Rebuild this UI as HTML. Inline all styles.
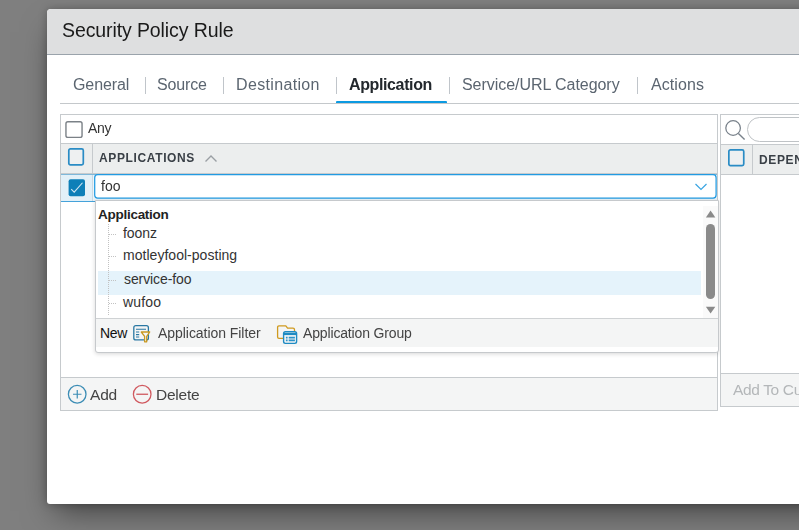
<!DOCTYPE html>
<html><head><meta charset="utf-8"><title>Security Policy Rule</title>
<style>
*{box-sizing:border-box;margin:0;padding:0}
html,body{width:799px;height:530px;overflow:hidden;background:#7f7f7f;font-family:"Liberation Sans",sans-serif;}
.abs{position:absolute}
#dlg{position:absolute;left:47px;top:9px;width:800px;height:495px;background:#fff;border-radius:4px 4px 3px 3px;box-shadow:0 15px 30px -8px rgba(0,0,0,.5),0 0 8px rgba(0,0,0,.25);}
#hdr{position:absolute;left:0;top:0;width:100%;height:46px;background:#dedfe0;border-bottom:1px solid #9aa3ab;border-radius:4px 4px 0 0}
.t{position:absolute;white-space:nowrap;line-height:1;will-change:transform}
.tab{font-size:16px;color:#5b6570}
.sep{position:absolute;top:77px;width:1px;height:17px;background:#c0c5ca}
.lcd{will-change:auto}
</style></head><body>
<div id="dlg"><div id="hdr"></div></div>

<div class="t" id="title" style="left:61.6px;top:20.8px;font-size:19.5px;letter-spacing:-0.1px;color:#1a1a1a">Security Policy Rule</div>

<!-- tabs -->
<div class="t tab" style="left:72.6px;top:77.3px;letter-spacing:-0.1px">General</div>
<div class="sep" style="left:145px"></div>
<div class="t tab" style="left:157.4px;top:77.3px;letter-spacing:-0.15px">Source</div>
<div class="sep" style="left:223px"></div>
<div class="t tab" style="left:236.3px;top:77.3px;letter-spacing:0.34px">Destination</div>
<div class="sep" style="left:336px"></div>
<div class="t tab" style="left:349px;top:77.3px;font-weight:bold;color:#23282d;letter-spacing:-0.38px">Application</div>
<div class="sep" style="left:449px"></div>
<div class="t tab" style="left:462.4px;top:77.3px;letter-spacing:-0.05px">Service/URL Category</div>
<div class="sep" style="left:637px"></div>
<div class="t tab" style="left:650.75px;top:77.3px;letter-spacing:0.07px">Actions</div>
<div class="abs" style="left:60px;top:103px;width:740px;height:1px;background:#c4c8cb"></div>
<div class="abs" style="left:336px;top:100.8px;width:111px;height:2.3px;background:#0c9ae1;border-radius:1px 1px 0 0"></div>

<!-- left panel -->
<div class="abs" style="left:60px;top:114px;width:658px;height:297px;border:1px solid #c6cacd;background:#fff"></div>
<!-- any row -->
<svg class="abs" style="left:64px;top:120px" width="20" height="20" viewBox="0 0 20 20"><rect x="1.95" y="1.8" width="16.1" height="15.6" rx="2" fill="#fff" stroke="#7b8187" stroke-width="1.4"/></svg>
<div class="t" style="left:87.5px;top:120.8px;font-size:14px;color:#333;letter-spacing:-0.37px">Any</div>
<!-- header row -->
<div class="abs" style="left:61px;top:143px;width:656px;height:31px;background:#eceeee;border-top:1px solid #c6cacd;border-bottom:1px solid #c6cacd"></div>
<div class="abs" style="left:92px;top:144px;width:1px;height:29px;background:#c6cacd"></div>
<svg class="abs" style="left:66px;top:146px" width="20" height="22" viewBox="0 0 20 22"><rect x="2.8" y="2.8" width="14.5" height="16" rx="1.6" fill="#eef0f1" stroke="#2a8cc5" stroke-width="1.7"/></svg>
<div class="t" style="left:98.5px;top:152.4px;font-size:12px;font-weight:bold;color:#3a4047;letter-spacing:0.63px">APPLICATIONS</div>
<svg class="abs" style="left:204px;top:154px" width="14" height="9" viewBox="0 0 14 9"><path d="M1.5 7.5 L7 2 L12.5 7.5" fill="none" stroke="#9a9fa4" stroke-width="1.4"/></svg>
<!-- selected row -->
<div class="abs" style="left:61px;top:174px;width:656px;height:28px;background:#e2f0f8;border-top:1px solid #7fb8da;border-bottom:1px solid #45a2da"></div>

<svg class="abs" style="left:66px;top:177px" width="22" height="22" viewBox="0 0 22 22"><rect x="2.6" y="2.2" width="16.4" height="17.1" rx="2" fill="#0d7fb8"/><path d="M5.2 12.2 L8.2 15.2 L16.5 5.75" fill="none" stroke="#cfe6f3" stroke-width="1.1"/></svg>
<div class="abs" style="left:93px;top:175px;width:624px;height:26px;background:#ebf5fa"></div>
<div class="abs" style="left:92px;top:175px;width:1px;height:26px;background:#cdd9e1"></div>
<svg class="abs" style="left:93px;top:173px" width="626" height="28" viewBox="0 0 626 28"><rect x="1.7" y="1.65" width="621.4" height="23.45" rx="3" fill="#fff" stroke="#229be2" stroke-width="1.25"/></svg>
<div class="t" style="left:101px;top:179px;font-size:14px;color:#333">foo</div>
<svg class="abs" style="left:694px;top:182px" width="14" height="10" viewBox="0 0 14 10"><path d="M1.5 2 L7 7.5 L12.5 2" fill="none" stroke="#3aa5e2" stroke-width="1.2"/></svg>

<!-- dropdown -->
<div class="abs" style="left:95px;top:200px;width:624px;height:153px;background:#fff;border:1px solid #c6c9cc;border-radius:0 0 3px 3px;box-shadow:0 1px 4px rgba(0,0,0,.16)"></div>
<div class="t lcd" style="left:98px;top:208px;font-size:13.5px;font-weight:bold;color:#222;letter-spacing:-0.27px">Application</div>
<div class="abs" style="left:98px;top:271px;width:603px;height:24px;background:#e5f3fb"></div>
<div class="abs" style="left:108px;top:224px;width:0;height:91px;border-left:1px dotted #c2c2c2"></div>
<div class="abs" style="left:109px;top:234px;width:7px;height:0;border-top:1px dotted #c2c2c2"></div>
<div class="abs" style="left:109px;top:256px;width:7px;height:0;border-top:1px dotted #c2c2c2"></div>
<div class="abs" style="left:109px;top:280px;width:7px;height:0;border-top:1px dotted #c2c2c2"></div>
<div class="abs" style="left:109px;top:303px;width:7px;height:0;border-top:1px dotted #c2c2c2"></div>
<div class="t lcd" style="left:123px;top:225.6px;font-size:14px;color:#333;letter-spacing:-0.05px">foonz</div>
<div class="t lcd" style="left:123px;top:248.2px;font-size:14px;color:#333;letter-spacing:0.03px">motleyfool-posting</div>
<div class="t lcd" style="left:124px;top:272px;font-size:14px;color:#333;letter-spacing:-0.1px">service-foo</div>
<div class="t lcd" style="left:123px;top:294.9px;font-size:14px;color:#333;letter-spacing:0.15px">wufoo</div>
<!-- scrollbar -->
<div class="abs" style="left:703px;top:206px;width:15px;height:112px;background:#fafafa"></div>
<svg class="abs" style="left:705px;top:210px" width="11" height="8" viewBox="0 0 11 8"><path d="M5.6 0.6 Q5.6 0.6 10.3 7.4 L0.9 7.4 Z" fill="#8a8a8a"/></svg>
<div class="abs" style="left:706px;top:224px;width:9px;height:75px;background:#8a8a8a;border-radius:4.5px"></div>
<svg class="abs" style="left:705px;top:306px" width="11" height="8" viewBox="0 0 11 8"><path d="M0.9 0.8 L10.3 0.8 L5.6 7.6 Z" fill="#8a8a8a"/></svg>
<!-- dropdown footer -->
<div class="abs" style="left:96px;top:318px;width:622px;height:29px;background:#f4f5f5;border-top:1px solid #cfd2d4"></div>
<div class="t lcd" style="left:100px;top:326px;font-size:14px;color:#111;letter-spacing:-0.33px">New</div>
<div class="t" style="left:158px;top:326px;font-size:14px;color:#444;letter-spacing:-0.05px">Application Filter</div>
<div class="t" style="left:302.5px;top:326px;font-size:14px;color:#444;letter-spacing:-0.15px">Application Group</div>

<!-- bottom bar -->
<div class="abs" style="left:61px;top:377px;width:656px;height:33px;background:#f4f5f5;border-top:1px solid #c6cacd"></div>
<div class="t" style="left:90.4px;top:387px;font-size:15.5px;color:#444;letter-spacing:-0.2px">Add</div>
<div class="t" style="left:155.8px;top:387px;font-size:15.5px;color:#444;letter-spacing:-0.25px">Delete</div>

<!-- right panel -->
<div class="abs" style="left:720px;top:114px;width:100px;height:293px;border:1px solid #c6cacd;background:#fff"></div>
<div class="abs" style="left:747px;top:117px;width:80px;height:25px;border:1px solid #bfc3c6;border-radius:12.5px;background:#fff"></div>
<div class="abs" style="left:721px;top:144px;width:99px;height:31px;background:#eceeee;border-top:1px solid #c6cacd;border-bottom:1px solid #c6cacd"></div>
<div class="abs" style="left:752px;top:145px;width:1px;height:29px;background:#c6cacd"></div>
<svg class="abs" style="left:726px;top:147px" width="21" height="22" viewBox="0 0 21 22"><rect x="2.85" y="2.85" width="14.9" height="15.8" rx="1.6" fill="#eef0f1" stroke="#2a8cc5" stroke-width="1.7"/></svg>
<div class="t" style="left:759.4px;top:154px;font-size:12px;font-weight:bold;color:#3a4047;letter-spacing:0.63px">DEPENDS</div>
<div class="abs" style="left:721px;top:373px;width:99px;height:33px;background:#f4f5f5;border-top:1px solid #c6cacd"></div>
<div class="t" style="left:732.6px;top:381.9px;font-size:15.5px;letter-spacing:-0.35px;color:#b4b7b9">Add To Current Rule</div>

<!-- icons -->
<svg class="abs" style="left:66px;top:383px" width="22" height="22" viewBox="0 0 22 22"><circle cx="11.2" cy="11.25" r="8.8" fill="none" stroke="#3c8db5" stroke-width="1.3"/><path d="M7 11.25 H15.5 M11.25 7 V15.5" stroke="#3c8db5" stroke-width="1.2" fill="none"/></svg>
<svg class="abs" style="left:131px;top:383px" width="22" height="22" viewBox="0 0 22 22"><circle cx="11.2" cy="11.25" r="8.8" fill="none" stroke="#d0595f" stroke-width="1.3"/><path d="M5.3 11.25 H17.1" stroke="#d0595f" stroke-width="1.3" fill="none"/></svg>
<svg class="abs" style="left:131px;top:323px" width="22" height="22" viewBox="0 0 22 22"><rect x="2.8" y="2.7" width="14.6" height="14.2" rx="2" fill="none" stroke="#2a78a3" stroke-width="1.3"/><path d="M5 6.3 H15 M5 9 H8.2 M5 11.6 H8.2 M5 14 H8.2" stroke="#2a78a3" stroke-width="1.1" fill="none"/><path d="M10.3 9 H18.7 L15.7 13.3 V18.8 H13.6 V13.3 Z" fill="#f4f5f5" stroke="#c9981f" stroke-width="1.3" stroke-linejoin="round"/></svg>
<svg class="abs" style="left:275px;top:323px" width="24" height="23" viewBox="0 0 24 23"><path d="M19.5 8.5 V6.8 Q19.5 5.2 18 5.2 H12.6 L10.8 2.9 H4 Q2.6 2.9 2.6 4.3 V14 Q2.6 15.4 4 15.4 H8.5" fill="none" stroke="#cf9a1f" stroke-width="1.3"/><rect x="8.6" y="8.8" width="13" height="11.6" rx="1.8" fill="#f4f5f5" stroke="#1e8bc3" stroke-width="1.4"/><path d="M9 11 H21.2" stroke="#1e8bc3" stroke-width="2.2"/><path d="M10.9 13.8 H12.6 V15.5 H10.9 Z M13.7 13.8 H19.9 V15.5 H13.7 Z M10.9 16.6 H12.6 V18.3 H10.9 Z M13.7 16.6 H19.9 V18.3 H13.7 Z" fill="#2a93c9"/></svg>
<svg class="abs" style="left:723px;top:118px" width="24" height="24" viewBox="0 0 24 24"><circle cx="10.1" cy="10" r="7.3" fill="none" stroke="#78818a" stroke-width="1.25"/><path d="M15.4 15.4 L21.6 21.4" stroke="#78818a" stroke-width="1.4" fill="none"/></svg>
</body></html>
